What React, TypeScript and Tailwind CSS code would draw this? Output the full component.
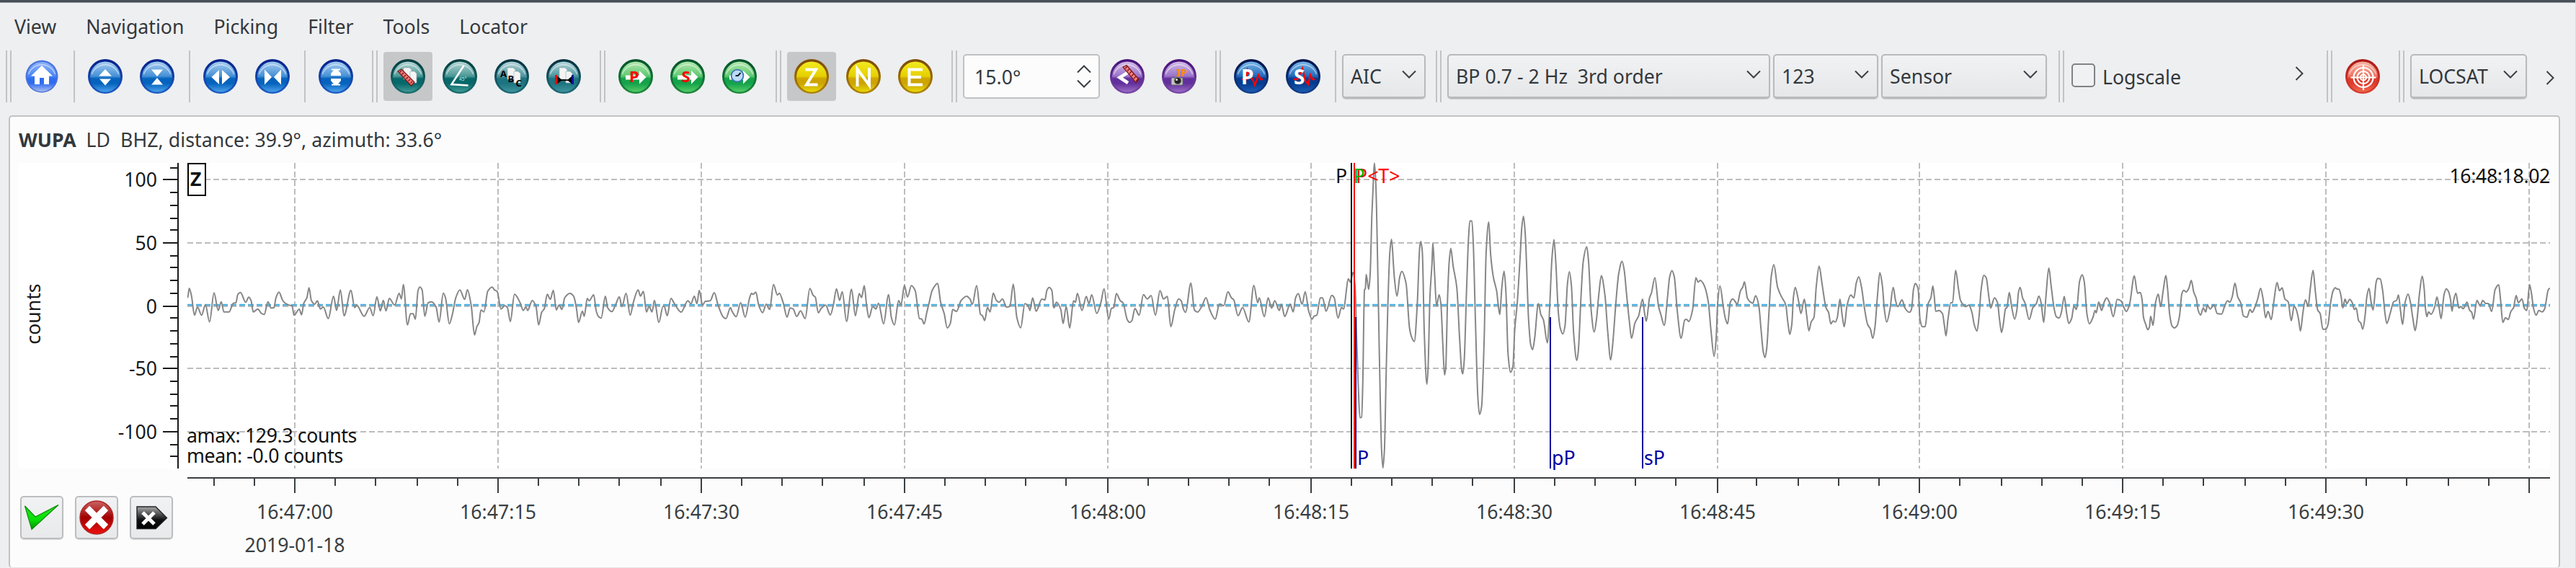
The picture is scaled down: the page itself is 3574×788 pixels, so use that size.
import type { ReactNode } from 'react';
import { clsx } from 'clsx';

type OrbTone = 'home' | 'blue' | 'teal' | 'slate' | 'green' | 'gold' | 'purple' | 'navy' | 'red';

// rim top, rim bottom, gloss top, gloss bottom, body middle, body bottom
const ORB_TONES: Record<OrbTone, string[]> = {
  home: ['#4a78e0', '#4a6fd8', '#8fb4f8', '#4a86f4', '#2f6df0', '#a8bcf0'],
  blue: ['#03208a', '#1f5fc4', '#a8cdf0', '#4590d6', '#0563bd', '#4aa0ea'],
  teal: ['#023c3e', '#1b6f70', '#b4d6d4', '#4b9896', '#06686a', '#3f9a94'],
  slate: ['#02303e', '#1f6c78', '#b6d6da', '#4b96a0', '#1c7480', '#3f949c'],
  green: ['#02502a', '#1f8a3c', '#b4e8ae', '#5cc870', '#14a24a', '#54cc68'],
  gold: ['#7a4a06', '#b08408', '#f2ea20', '#e6d000', '#cda400', '#e8da08'],
  purple: ['#451078', '#7a4aa8', '#d2bce8', '#9a72c8', '#62309c', '#9a6cc4'],
  navy: ['#021248', '#14408c', '#78b8ea', '#2468b8', '#063c90', '#1c5cb4'],
  red: ['#a81a16', '#dc4030', '#f8b4a4', '#ee7462', '#de3c2c', '#f06a50'],
};

interface OrbProps {
  tone: OrbTone;
  children: ReactNode;
}

function Orb({ tone, children }: OrbProps) {
  const [rimTop, rimBottom, glossTop, glossBottom, middle, bottom] = ORB_TONES[tone];
  return (
    <svg viewBox="0 0 48 48" className="size-12">
      <defs>
        <linearGradient id={`rim-${tone}`} x1="0" y1="0" x2="0" y2="1">
          <stop offset="0" stopColor={rimTop} />
          <stop offset="1" stopColor={rimBottom} />
        </linearGradient>
        <linearGradient id={`body-${tone}`} x1="0" y1="0" x2="0" y2="1">
          <stop offset="0" stopColor={glossTop} />
          <stop offset="0.48" stopColor={glossBottom} />
          <stop offset="0.56" stopColor={middle} />
          <stop offset="0.72" stopColor={middle} />
          <stop offset="1" stopColor={bottom} />
        </linearGradient>
      </defs>
      <circle cx="24" cy="24" r={tone === 'home' ? 22.5 : 24} fill={`url(#rim-${tone})`} />
      <circle cx="24" cy="24.5" r={tone === 'home' ? 20.5 : 21} fill={`url(#body-${tone})`} />
      {tone !== 'gold' && (
        <path
          d="M5.5 21A19.5 19.5 0 0 1 42.5 21"
          fill="none"
          stroke="#fff"
          strokeOpacity="0.5"
          strokeWidth="1.5"
        />
      )}
      {children}
    </svg>
  );
}

interface ToolButtonProps {
  tone: OrbTone;
  label: string;
  checked?: boolean;
  children: ReactNode;
}

function ToolButton({ tone, label, checked, children }: ToolButtonProps) {
  return (
    <button
      aria-label={label}
      className={clsx('flex size-[68px] items-center justify-center rounded', checked && 'bg-[#c6c7c8]')}
    >
      <Orb tone={tone}>{children}</Orb>
    </button>
  );
}

function Handle({ className = 'ml-4' }: { className?: string }) {
  return <div className={clsx('mr-2 h-[72px] w-2 border-x-2 border-[#c2c3c4]', className)} />;
}

function Separator() {
  return <div className="mr-2 ml-2.5 h-[72px] w-0.5 bg-[#c2c3c4]" />;
}

function Chevron({ direction = 'down' }: { direction?: 'down' | 'up' | 'right' }) {
  const d = {
    down: 'M1 1.5L10 10.5L19 1.5',
    up: 'M1 10.5L10 1.5L19 10.5',
    right: 'M1.5 1L10.5 10L1.5 19',
  }[direction];
  const right = direction === 'right';
  return (
    <svg viewBox={right ? '0 0 12 20' : '0 0 20 12'} className={right ? 'h-5 w-3' : 'h-3 w-5'}>
      <path d={d} fill="none" stroke="#3b4045" strokeWidth="2" />
    </svg>
  );
}

function ComboBox({ value, className }: { value: string; className: string }) {
  return (
    <div
      className={clsx(
        'flex h-[62px] items-center justify-between rounded-[5px] border-2 border-b-[3px] border-[#b9babb] bg-linear-to-b from-[#f1f2f3] to-[#e6e7e9] pr-[11px] pl-2.5 shadow-[0_1px_1px_rgba(0,0,0,0.15)]',
        className,
      )}
    >
      <span className="mt-0.5 whitespace-pre">{value}</span>
      <div className="-mt-1.5">
        <Chevron />
      </div>
    </div>
  );
}

const SHEET = (
  <g fill="#f4f4f4" stroke="#9aa" strokeWidth="0.6">
    <path d="M18 12H26L29 15V28H18Z" />
    <path d="M27 17H33L36 20V33H27Z" />
  </g>
);

function Toolbar() {
  return (
    <div className="flex h-[72px] items-center">
      <Handle className="ml-2" />
      <ToolButton tone="home" label="Home">
        <path d="M24 9L39 23.5H34V35H27V26H21V35H14V23.5H9Z" fill="#fff" />
      </ToolButton>
      <Separator />
      <div className="flex gap-1">
        <ToolButton tone="blue" label="Scale up">
          <path d="M15 23.5L24 14L33 23.5ZM16 27.5H32L24 36.5Z" fill="#fff" />
        </ToolButton>
        <ToolButton tone="blue" label="Scale down">
          <path d="M16 14.5H32L24 24ZM16 35.5H32L24 26Z" fill="#fff" />
        </ToolButton>
      </div>
      <Separator />
      <div className="flex gap-1">
        <ToolButton tone="blue" label="Stretch time">
          <path d="M22 15V35L11.5 25ZM26 15V35L37 25Z" fill="#fff" />
        </ToolButton>
        <ToolButton tone="blue" label="Compress time">
          <path d="M13 14.5L23 25L13 35.5ZM36 14.5L26 25L36 35.5Z" fill="#fff" />
        </ToolButton>
      </div>
      <Separator />
      <ToolButton tone="blue" label="Fit amplitudes">
        <path
          d="M18 13.5H30V15.5H27L31 20V23H17V20L21 15.5H18ZM17 27H31V30L27 34.5H30V36.5H18V34.5H21L17 30Z"
          fill="#fff"
        />
      </ToolButton>

      <Handle />
      <div className="flex gap-1">
        <ToolButton tone="teal" label="Measure" checked>
          {SHEET}
          <path d="M10 17L15 14L33 32L28.5 37Z" fill="#f07878" stroke="#7c1414" strokeWidth="1.2" />
          <path
            d="M15 16l-2.5 2.5M18 19l-2.5 2.5M21 22l-2.5 2.5M24 25l-2.5 2.5M27 28l-2.5 2.5M30 31l-2.5 2.5"
            stroke="#7c1414"
            strokeWidth="1.2"
          />
        </ToolButton>
        <ToolButton tone="teal" label="Angle">
          <path d="M29.5 9L12.5 35L35.5 36.5" fill="none" stroke="#fff" strokeWidth="2.6" />
          <text x="23" y="30" fontSize="6.5" fill="#d4e8e6">
            45°
          </text>
        </ToolButton>
        <ToolButton tone="slate" label="Sort alphabetically">
          {SHEET}
          <g fontSize="13" fontWeight="bold" fill="#000">
            <text x="8" y="25">
              A
            </text>
            <text x="18.5" y="32">
              B
            </text>
            <text x="29.5" y="38">
              C
            </text>
          </g>
        </ToolButton>
        <ToolButton tone="slate" label="Sort by distance">
          {SHEET}
          <path d="M12 22H15.5V35H12Z" fill="#f00" />
          <path d="M35 22H38V35H35Z" fill="#10109a" />
          <path d="M15.5 24L21 28.3H30L35 24V34L30 30H21L15.5 34Z" fill="#000" />
        </ToolButton>
      </div>

      <Handle />
      <div className="flex gap-1">
        <ToolButton tone="green" label="Sort by P">
          <path d="M10 22.5H29V16L38.5 25L29 34.5V28.5H10Z" fill="#fff" />
          <text x="15" y="31.5" fontSize="22" fontWeight="bold" fill="#f00">
            P
          </text>
        </ToolButton>
        <ToolButton tone="green" label="Sort by S">
          <path d="M10 22.5H29V16L38.5 25L29 34.5V28.5H10Z" fill="#fff" />
          <text x="15.5" y="31.5" fontSize="22" fontWeight="bold" fill="#f00">
            S
          </text>
        </ToolButton>
        <ToolButton tone="green" label="Sort by time">
          <path d="M10 22.5H29V16L38.5 25L29 34.5V28.5H10Z" fill="#fff" />
          <circle cx="21" cy="23" r="8.4" fill="#bcdcf6" stroke="#3c74b8" strokeWidth="1.8" />
          <path d="M18.5 23H22L25.5 19" fill="none" stroke="#123" strokeWidth="2" />
        </ToolButton>
      </div>

      <Handle />
      <div className="flex gap-1">
        <ToolButton tone="gold" label="Vertical component" checked>
          <path d="M15.5 14.5H30L17 35.5H32.5" fill="none" stroke="#fff" strokeWidth="4" />
        </ToolButton>
        <ToolButton tone="gold" label="North component">
          <path d="M15.5 38V13.8L32 36.2V12" fill="none" stroke="#fff" strokeWidth="4" />
        </ToolButton>
        <ToolButton tone="gold" label="East component">
          <path d="M34 14.5H15.5V35.5H34M15.5 25H32" fill="none" stroke="#fff" strokeWidth="4" />
        </ToolButton>
      </div>

      <Handle />
      <div className="flex h-[62px] w-[190px] items-center justify-between rounded-[5px] border-2 border-[#c0c1c2] bg-[#fcfcfc] pr-[10px] pl-3.5">
        <span className="mt-0.5">15.0°</span>
        <div className="flex flex-col gap-2">
          <Chevron direction="up" />
          <Chevron />
        </div>
      </div>
      <div className="ml-1 flex gap-1">
        <ToolButton tone="purple" label="Station distance">
          <path d="M25 18.5L13.5 25.5L25 33" fill="none" stroke="#fff" strokeWidth="4.5" />
          <path d="M18 11L23 8.5L40 28L36 32.5Z" fill="#f28080" stroke="#7c1414" strokeWidth="1.2" />
          <path
            d="M24 10l-3 3M27 13.5l-3 3M30 17l-3 3M33 20.5l-3 3M36 24l-3 3M39 27.5l-3 3"
            stroke="#7c1414"
            strokeWidth="1.2"
          />
        </ToolButton>
        <ToolButton tone="purple" label="Pick snapshot">
          <rect x="13" y="26" width="16" height="10" rx="1.5" fill="#c4c4c4" stroke="#666" />
          <circle cx="22" cy="30" r="5" fill="#222" stroke="#999" />
          <circle cx="20.5" cy="28.5" r="1.5" fill="#eee" />
          <text x="20" y="24" fontSize="15" fontWeight="bold" fill="#ff8a00">
            IP
          </text>
        </ToolButton>
      </div>

      <Handle />
      <div className="flex gap-1">
        <ToolButton tone="navy" label="Pick P">
          <path d="M10 28H17L19 15L25 28H26L29 36L34 22L37 28H40" fill="none" stroke="#f00" strokeWidth="2.4" />
          <text x="10" y="35" fontSize="28" fontWeight="bold" fill="#fff">
            P
          </text>
        </ToolButton>
        <ToolButton tone="navy" label="Pick S">
          <path d="M10 28H16L23 13L27 30L31 35L34 22L37 28H40" fill="none" stroke="#f00" strokeWidth="2.4" />
          <text x="11" y="35" fontSize="28" fontWeight="bold" fill="#fff">
            S
          </text>
        </ToolButton>
      </div>
      <Separator />
      <ComboBox value="AIC" className="w-[116px]" />

      <Handle className="ml-3.5" />
      <div className="flex gap-1">
        <ComboBox value="BP 0.7 - 2 Hz  3rd order" className="w-[448px]" />
        <ComboBox value="123" className="w-[146px]" />
        <ComboBox value="Sensor" className="w-[230px]" />
      </div>

      <Handle />
      <label className="ml-0.5 flex w-[310px] items-center">
        <span className="-mt-1 size-[33px] rounded-[5px] border-2 border-[#7f8387] bg-[#f0f1f2]" />
        <span className="mt-0.5 ml-2.5">Logscale</span>
      </label>
      <div className="-mt-2 w-11">
        <Chevron direction="right" />
      </div>

      <Handle className="ml-0" />
      <ToolButton tone="red" label="Relocate">
        <g fill="none" stroke="#fff" strokeWidth="2.2">
          <circle cx="25" cy="25.5" r="13.5" />
          <circle cx="25" cy="25.5" r="8.5" />
          <circle cx="25" cy="25.5" r="4" />
          <path d="M25 8V43M7.5 25.5H42.5" />
        </g>
      </ToolButton>

      <Handle />
      <ComboBox value="LOCSAT" className="w-[162px]" />
      <div className="mt-1 ml-[26px]">
        <Chevron direction="right" />
      </div>
    </div>
  );
}

interface TraceBlock {
  x: number;
  y: number;
  kx: number;
  ky: number;
  samples: string;
}

// Digitised samples, stored per block with the block's own origin and step
const TRACE: TraceBlock[] = [
  {
    x: 240,
    y: 360,
    kx: 0.523,
    ky: 1 / 3,
    samples:
      '39,160 43,120 49,150 57,232 65,198 76,232 86,188 97,260 109,139 120,212 128,176 135,218 149,218 160,182 167,180 172,145 179,137 193,178 201,157 207,170 213,218 225,206 235,225 242,229 252,176 260,202 268,200 273,160 281,136 291,170 298,182 307,190 316,192 321,232 335,207 341,230 347,182 355,160 361,118 367,170 376,186 383,172 391,206 399,198 412,246 426,153 434,212 444,127 454,234 472,128 482,200 487,190 507,236 522,200 531,234 541,155 550,214 558,170 565,214 574,162 588,190 600,141 606,164 611,104 622,272 630,226 637,226 643,248 650,130 655,115 661,127 668,236 677,180 686,176 698,198 706,260 717,140 723,160 733,268 741,230 750,160 761,127 774,166 781,126 791,190 800,314 806,280 812,262 817,210 825,218 835,132 847,115 853,127 860,133 870,206 880,192 887,200 895,258 906,145 922,184 929,212 936,198 941,212 953,171 963,195 970,272 978,220 985,205 993,145 1001,166 1009,128 1017,210 1024,190 1032,208 1039,160 1053,141 1063,153 1070,200 1076,262 1086,215 1091,236 1099,162 1104,172 1116,147 1123,215 1129,238 1136,244 1147,153 1153,200 1164,217 1175,185 1184,155 1191,196 1202,141 1213,232 1221,180 1234,127 1240,152 1248,133 1256,218 1263,195 1271,218 1277,170 1289,262 1300,195 1303,195 1311,234 1321,162 1330,183 1348,219 1366,172 1374,184 1383,153 1390,184 1396,128 1405,190 1412,174 1425,172 1436,138 1446,190 1460,240 1467,246 1479,200 1483,215 1494,238 1506,180 1518,240',
  },
  {
    x: 1040,
    y: 360,
    kx: 0.5357,
    ky: 1 / 3,
    samples:
      '0,160 5,141 9,145 16,136 24,192 34,221 43,186 52,208 62,104 72,148 77,140 87,180 97,240 105,202 113,206 122,237 132,214 144,246 156,121 165,150 170,156 178,222 185,205 197,190 209,231 217,190 225,122 233,170 240,134 251,258 264,124 274,234 284,142 290,158 297,109 303,190 309,242 319,196 327,206 334,182 347,268 360,146 367,240 375,272 386,171 392,190 401,108 409,156 419,109 429,130 440,246 446,248 452,268 459,220 465,180 473,128 487,100 495,180 504,225 512,285 520,265 526,208 536,216 548,170 562,153 571,165 577,187 588,109 598,228 603,234 609,254 616,200 623,218 631,140 639,170 646,178 655,164 665,198 674,195 683,103 692,240 702,284 713,184 722,195 726,212 733,160 742,215 757,165 765,168 770,128 776,116 783,130 788,202 795,178 806,208 812,266 820,196 829,285 839,172 844,178 849,141 861,212 872,154 879,184 886,147 899,224 910,178 918,122 930,248 937,204 943,200 950,142 960,172 967,180 978,250 984,262 990,255 998,204 1009,232 1020,146 1030,164 1040,150 1051,232 1063,130 1072,164 1082,154 1091,280 1101,210 1111,164 1118,172 1123,204 1129,220 1143,98 1152,210 1160,219 1172,192 1182,159 1192,210 1206,248 1217,185 1228,192 1239,134 1248,160 1254,168 1265,234 1277,200 1293,260 1306,108 1316,180 1320,160 1333,238 1343,160 1352,202 1360,172 1372,212 1377,186 1386,237 1400,186 1408,218 1414,160 1421,142 1431,186 1439,134 1448,215 1457,248 1462,236 1469,232 1478,160 1484,160 1493,215 1508,149 1514,158 1524,244 1533,200 1538,206',
  },
  {
    x: 1780,
    y: 200,
    kx: 0.3954,
    ky: 0.375,
    samples:
      '230,498 236,510 246,475 254,540 258,700 264,890 270,1012 276,1010 280,890 286,540 289,535 292,482 301,537 306,480 312,260 318,120 321,70 326,150 332,430 338,760 346,1130 351,1198 356,1130 362,860 368,600 375,400 381,352 388,450 391,495 400,562 410,490 417,471 432,515 444,680 452,715 461,730 471,600 480,380 484,360 489,400 496,700 505,888 509,830 516,560 523,440 526,365 532,480 539,598 548,557 554,590 561,740 567,854 571,830 578,560 583,440 589,385 597,450 610,530 620,720 627,835 631,850 636,800 644,550 651,350 656,284 663,284 668,370 675,640 684,940 690,1000 697,970 706,720 713,400 722,288 729,410 738,490 750,545 756,600 761,630 768,530 776,470 782,540 790,780 799,844 807,822 813,690 822,590 832,420 838,310 844,267 850,330 862,650 869,740 876,760 883,720 896,590 905,630 914,650 928,735 936,600 944,420 951,353 957,430 966,620 973,680 982,702 990,670 998,520 1005,472 1012,520 1020,700 1031,800 1036,770 1046,560 1054,430 1066,380 1072,430 1082,620 1092,695 1100,650 1108,560 1117,487 1130,560 1140,700 1150,798 1157,740 1168,590 1178,480 1190,433 1198,470 1206,560 1216,660 1223,718 1235,662 1248,635 1262,573 1268,620 1275,655 1286,570 1293,550 1305,494 1318,600 1326,630 1338,670 1350,560 1357,490 1365,468 1373,490 1384,620 1397,718 1410,650 1416,648 1424,656 1437,615 1449,494 1457,510 1465,504 1477,520 1492,580 1502,690 1513,785 1520,720',
  },
  {
    x: 2380,
    y: 340,
    kx: 0.3954,
    ky: 1 / 3,
    samples:
      '8,240 16,170 28,260 35,305 43,328 52,238 61,224 72,240 76,248 88,190 96,175 102,153 112,220 122,236 131,242 141,211 152,250 160,350 168,445 174,468 180,430 188,280 196,130 205,82 218,175 232,215 247,250 254,320 261,372 268,330 274,215 280,176 292,235 300,285 312,225 320,290 328,357 336,320 346,300 354,170 364,88 374,160 388,260 397,280 405,328 413,316 421,320 428,300 437,225 445,295 452,340 462,250 475,208 486,220 494,160 503,132 512,170 524,270 534,330 544,350 552,388 560,340 568,220 577,115 586,170 593,270 601,320 612,270 624,176 632,230 640,256 655,228 665,262 680,280 688,268 695,185 701,160 711,180 718,310 726,340 736,340 746,245 756,220 763,170 768,215 773,276 784,272 797,286 803,330 809,378 816,310 826,240 832,240 843,105 852,175 860,230 868,246 879,256 889,250 900,280 908,330 918,358 925,300 932,190 942,126 950,135 960,220 966,262 979,220 990,240 997,310 1004,364 1010,330 1018,265 1023,260 1031,197 1040,260 1050,308 1058,270 1063,200 1069,176 1078,220 1086,240 1101,310 1114,260 1126,244 1135,212 1143,240 1152,322 1160,210 1170,95 1178,170 1188,260 1196,298 1206,304 1214,280 1224,214 1232,280 1240,326 1250,305 1258,254 1267,268 1278,150 1287,124 1294,150 1304,290 1312,328 1325,300 1332,272 1336,282 1345,237 1355,272 1364,238 1373,220 1383,240 1396,298 1410,226 1424,233 1434,262 1442,276 1453,248 1470,128 1481,200 1491,197 1497,225 1502,300 1510,330 1517,352 1523,340',
  },
  {
    x: 2980,
    y: 340,
    kx: 0.3788,
    ky: 1 / 3,
    samples:
      '10,296 19,334 28,240 38,204 47,256 56,190 66,127 72,180 80,290 88,335 97,345 107,335 116,295 124,205 131,188 140,195 150,180 159,147 168,195 178,225 184,270 193,291 203,262 212,278 218,250 228,266 242,248 254,285 270,287 281,255 292,232 300,238 309,215 319,158 329,215 340,240 350,295 363,300 374,268 382,280 392,258 402,225 413,180 422,225 431,302 440,276 452,310 462,230 473,156 482,190 492,178 502,225 514,236 525,315 536,254 544,270 552,310 559,358 568,280 577,228 587,255 595,180 605,106 614,200 622,270 631,285 641,350 652,350 660,330 670,235 678,192 686,178 694,183 700,184 708,215 714,262 722,225 729,244 739,226 748,238 756,268 763,262 772,315 780,325 787,350 796,290 802,215 810,180 818,240 825,270 836,155 841,139 851,141 860,190 868,280 875,326 888,282 900,236 911,230 918,208 925,270 933,330 942,240 953,204 962,240 970,300 979,356 986,310 995,200 1005,130 1012,180 1017,265 1022,298 1028,278 1037,288 1050,260 1059,216 1068,270 1074,306 1085,205 1093,182 1102,195 1109,230 1114,275 1120,230 1128,200 1139,262 1146,256 1155,265 1169,238 1178,270 1186,280 1193,308 1205,230 1217,252 1227,230 1236,242 1248,244 1259,276 1272,185 1285,165 1292,230 1300,322 1310,302 1320,310 1330,275 1339,262 1349,210 1357,240 1370,224 1380,265 1388,272 1398,165 1405,200 1412,260 1422,292 1432,272 1444,278 1453,266 1467,185 1473,180',
  },
];

// Cubic through all samples, flat at each extremum so peaks never overshoot
function tracePath(blocks: TraceBlock[]) {
  const pts = blocks.flatMap((b) =>
    b.samples.split(' ').map((pair) => {
      const [px, py] = pair.split(',').map(Number);
      return [b.x + px * b.kx, b.y + py * b.ky];
    }),
  );
  const slope = (i: number) => (pts[i + 1][1] - pts[i][1]) / (pts[i + 1][0] - pts[i][0]);
  const tangents = pts.map((_, i) => {
    if (i === 0 || i === pts.length - 1) return 0;
    const before = slope(i - 1);
    const after = slope(i);
    return before * after <= 0 ? 0 : (2 * before * after) / (before + after);
  });
  let d = `M${pts[0][0].toFixed(1)} ${pts[0][1].toFixed(1)}`;
  for (let i = 1; i < pts.length; i++) {
    const [x0, y0] = pts[i - 1];
    const [x1, y1] = pts[i];
    const h = (x1 - x0) / 3;
    const values = [x0 + h, y0 + tangents[i - 1] * h, x1 - h, y1 - tangents[i] * h, x1, y1];
    d += `C${values.map((v) => v.toFixed(1)).join(' ')}`;
  }
  return d;
}

const Y_MAJOR = [
  { label: '100', y: 249 },
  { label: '50', y: 337 },
  { label: '0', y: 425 },
  { label: '-50', y: 511 },
  { label: '-100', y: 599 },
];
const Y_MINOR = [233, 267, 285, 303, 319, 355, 371, 389, 407, 441, 459, 477, 495, 529, 547, 563, 581, 617, 633];

const X_MAJOR = [409, 691, 973, 1255, 1537, 1819, 2101, 2383, 2663, 2945, 3227, 3509];
const X_LABELS = [
  '16:47:00',
  '16:47:15',
  '16:47:30',
  '16:47:45',
  '16:48:00',
  '16:48:15',
  '16:48:30',
  '16:48:45',
  '16:49:00',
  '16:49:15',
  '16:49:30',
];
const X_MINOR = Array.from({ length: 58 }, (_, i) => i - 2)
  .filter((i) => i % 5 !== 0)
  .map((i) => 2 * Math.floor((409 + i * 56.36) / 2) + 1)
  .filter((x) => x < 3538);

function YAxis() {
  return (
    <svg viewBox="26 226 234 424" className="h-[424px] w-[234px] shrink-0" fill="#1a1a1a">
      <g stroke="#1a1a1a" strokeWidth="2">
        <path d="M247 226V650" />
        {Y_MAJOR.map(({ y }) => (
          <path key={y} d={`M226 ${y}H247`} />
        ))}
        {Y_MINOR.map((y) => (
          <path key={y} d={`M236 ${y}H247`} />
        ))}
      </g>
      {Y_MAJOR.map(({ label, y }) => (
        <text key={label} x="218" y={y + 10} textAnchor="end">
          {label}
        </text>
      ))}
      <text x="56" y="435.5" textAnchor="middle" transform="rotate(-90 56 435.5)">
        counts
      </text>
    </svg>
  );
}

function Seismogram() {
  return (
    <svg viewBox="260 226 3278 424" className="h-[424px] w-[3278px] shrink-0 overflow-visible" fill="#111">
      <g stroke="#bdbdbd" strokeWidth="2" strokeDasharray="8 4">
        {X_MAJOR.map((x) => (
          <path key={x} d={`M${x} 226V650`} />
        ))}
        {Y_MAJOR.map(({ y }) => (
          <path key={y} d={`M260 ${y}H3538`} />
        ))}
      </g>
      <path d="M260 423H3538" stroke="#4fb2e2" strokeWidth="2.4" strokeDasharray="8 4" />
      <path d={tracePath(TRACE)} fill="none" stroke="#868686" strokeWidth="2" strokeLinejoin="round" />

      <g stroke="#0000a0" strokeWidth="2">
        <path d="M1881 440V650" />
        <path d="M2151 440V650" />
        <path d="M2279 440V650" />
      </g>
      <path d="M1875 226V650" stroke="#000" strokeWidth="2" />
      <path d="M1879 226V650" stroke="#f00" strokeWidth="2" />

      <text x="1853" y="254">
        P
      </text>
      <text x="1881" y="254" fill="#f00">
        P&lt;T&gt;
      </text>
      <text x="1877.5" y="254" fill="#00b400">
        P
      </text>
      <g fill="#0000a0">
        <text x="1883" y="645">
          P
        </text>
        <text x="2153" y="645">
          pP
        </text>
        <text x="2281" y="645">
          sP
        </text>
      </g>

      <rect x="261" y="227" width="24" height="44" fill="#fff" stroke="#000" strokeWidth="2" />
      <text x="264" y="258" fontWeight="bold">
        Z
      </text>
      <g className="tracking-[-0.35px]">
        <text x="3538" y="254" textAnchor="end">
          16:48:18.02
        </text>
        <text x="259" y="614">
          amax: 129.3 counts
        </text>
        <text x="259" y="642">
          mean: -0.0 counts
        </text>
      </g>
    </svg>
  );
}

function TimeAxis() {
  return (
    <svg viewBox="260 650 3278 138" className="h-[138px] w-[3278px] shrink-0" fill="#3a3f42">
      <g stroke="#3a3f42" strokeWidth="2">
        <path d="M260 663H3538" />
        {X_MAJOR.map((x) => (
          <path key={x} d={`M${x} 663V684`} />
        ))}
        {X_MINOR.map((x) => (
          <path key={x} d={`M${x} 663V674`} />
        ))}
      </g>
      {X_LABELS.map((label, i) => (
        <text key={label} x={X_MAJOR[i]} y="720" textAnchor="middle">
          {label}
        </text>
      ))}
      <text x="409" y="766" textAnchor="middle">
        2019-01-18
      </text>
    </svg>
  );
}

function ActionButton({ label, children }: { label: string; children: ReactNode }) {
  return (
    <button
      aria-label={label}
      className="flex size-[60px] items-center justify-center rounded-[5px] border-2 border-[#bcbdbe] bg-linear-to-b from-[#f1f2f3] to-[#e8e9ea] shadow-[0_1px_1px_rgba(0,0,0,0.15)]"
    >
      <svg viewBox="0 0 48 48" className="size-12 shrink-0">
        {children}
      </svg>
    </button>
  );
}

function PickActions() {
  return (
    <div className="flex w-[234px] shrink-0 gap-4 pt-[38px] pl-0.5">
      <ActionButton label="Confirm">
        <defs>
          <linearGradient id="tick" x1="0" y1="0" x2="0" y2="1">
            <stop offset="0" stopColor="#2ce020" />
            <stop offset="0.6" stopColor="#06e006" />
            <stop offset="1" stopColor="#058a05" />
          </linearGradient>
        </defs>
        <path d="M0.5 8L15 23L47 6.5L10 40.5Z" fill="url(#tick)" stroke="#0a8c0a" strokeWidth="1.2" />
      </ActionButton>
      <ActionButton label="Cancel">
        <defs>
          <linearGradient id="cross" x1="0" y1="0" x2="0" y2="1">
            <stop offset="0" stopColor="#c86464" />
            <stop offset="0.35" stopColor="#b02020" />
            <stop offset="0.5" stopColor="#a00000" />
            <stop offset="1" stopColor="#ee1010" />
          </linearGradient>
        </defs>
        <circle cx="24" cy="24" r="23" fill="url(#cross)" stroke="#b02424" strokeWidth="1.4" />
        <path d="M11 11L37 37M37 11L11 37" stroke="#fff" strokeWidth="9" />
      </ActionButton>
      <ActionButton label="Discard">
        <defs>
          <linearGradient id="tag" x1="0" y1="0" x2="0" y2="1">
            <stop offset="0" stopColor="#a8a8a8" />
            <stop offset="0.6" stopColor="#101010" />
            <stop offset="1" stopColor="#000" />
          </linearGradient>
        </defs>
        <path d="M4 9H30L45.5 24.5L30 39.5H4Z" fill="url(#tag)" stroke="#222" strokeWidth="1.4" />
        <path d="M12 17L28 33M28 17L12 33" stroke="#fff" strokeWidth="5" />
      </ActionButton>
    </div>
  );
}

const MENUS = ['View', 'Navigation', 'Picking', 'Filter', 'Tools', 'Locator'];

export default function App() {
  return (
    <div className="flex h-[788px] w-[3574px] flex-col overflow-hidden border-r border-[#dcdddf] bg-[#eeeff1] font-['Noto_Sans',sans-serif] text-[26.67px] leading-none text-[#33383c]">
      <div className="h-1 shrink-0 border-b border-[#8d9398] bg-[#475057]" />
      <nav className="flex h-[66px] shrink-0 items-center gap-[41px] pl-5">
        {MENUS.map((menu) => (
          <span key={menu}>{menu}</span>
        ))}
      </nav>
      <Toolbar />
      <main className="mt-[18px] ml-3 flex h-[628px] w-[3540px] shrink-0 flex-col rounded-[5px] border-2 border-b border-[#c2c3c4] border-b-[#e4e5e6] bg-[#fcfcfc]">
        <header className="flex h-16 items-center pl-3 whitespace-pre">
          <span className="font-bold">WUPA</span>
          <span className="tracking-[0.06px]">{'  LD  BHZ, distance: 39.9°, azimuth: 33.6°'}</span>
        </header>
        <div className="mx-3 flex bg-white">
          <YAxis />
          <Seismogram />
        </div>
        <div className="mx-3 flex h-[135px]">
          <PickActions />
          <TimeAxis />
        </div>
      </main>
    </div>
  );
}
